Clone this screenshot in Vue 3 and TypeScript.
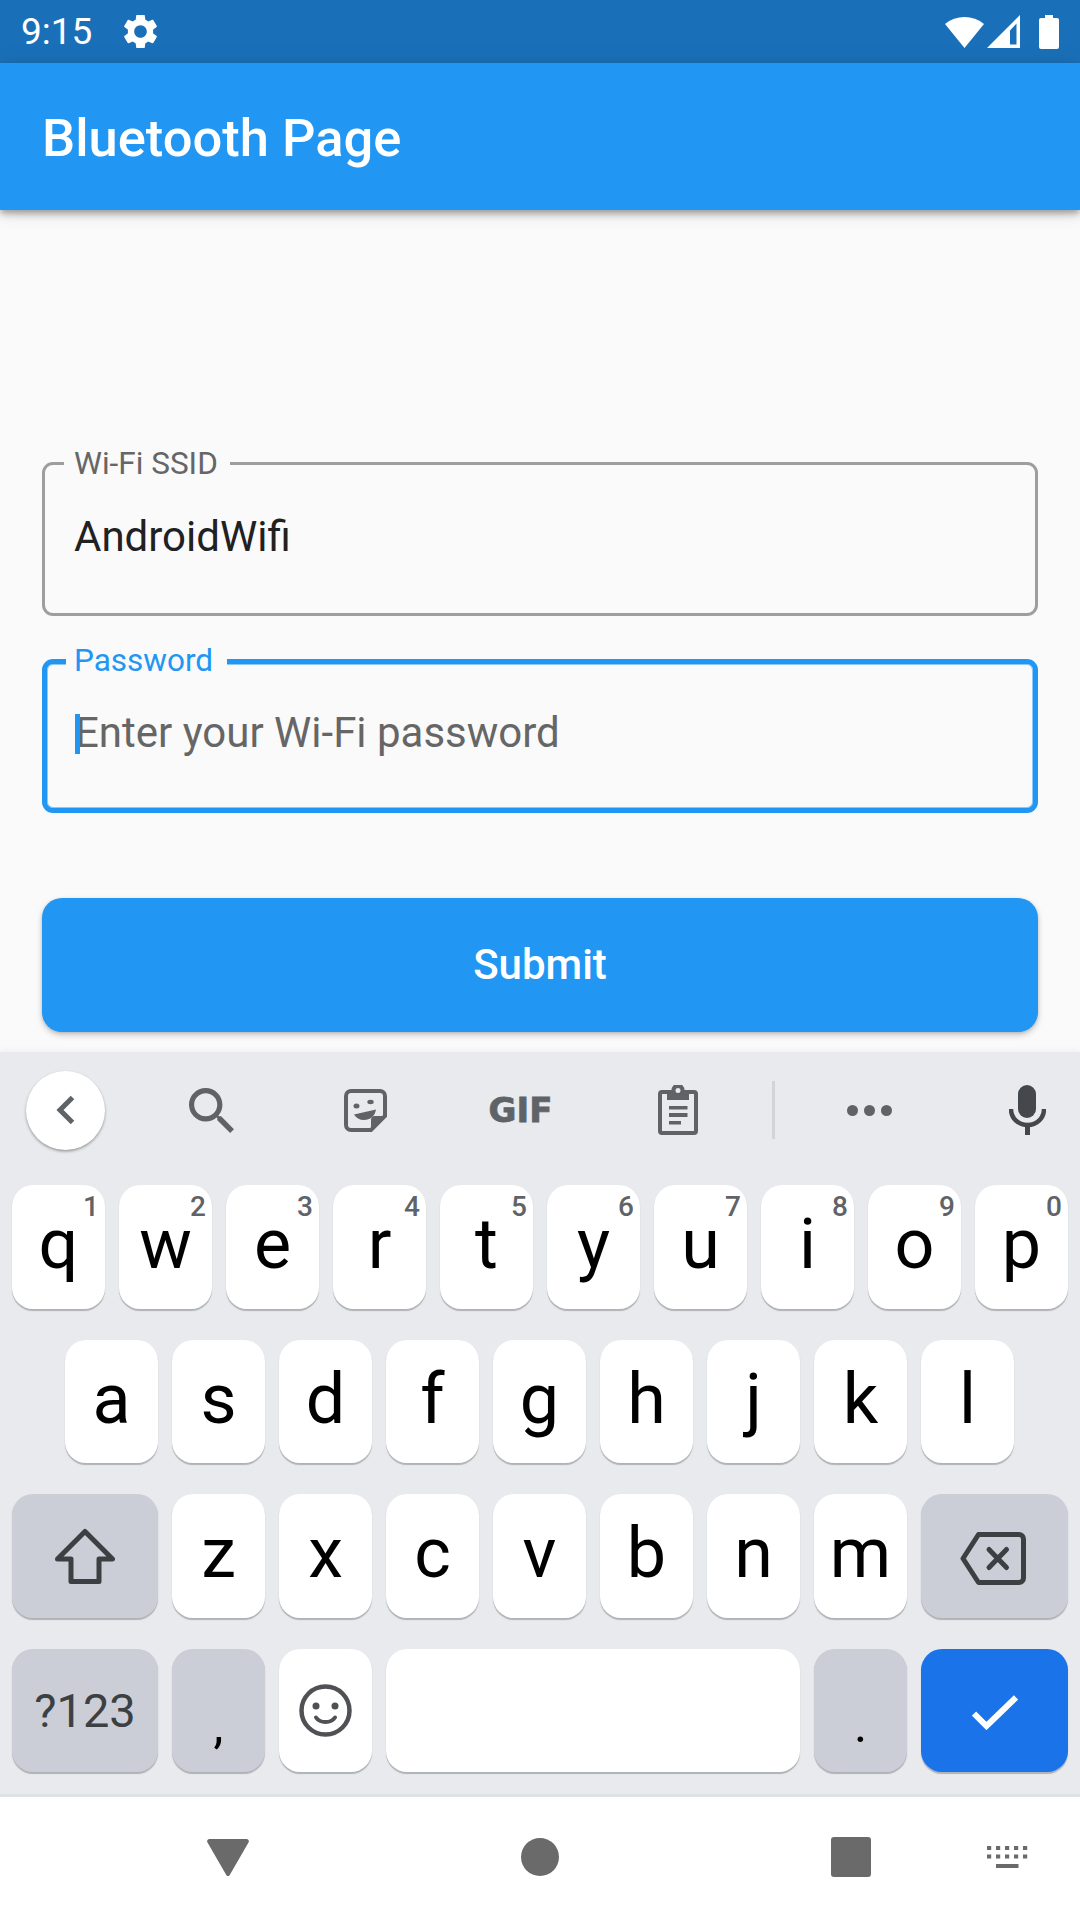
<template>
    <main class="screen">
        <div class="status-bar">
            <span class="clock">9:15</span>
            <svg class="gear" viewBox="2.6 2.6 18.8 18.8">
                <path
                    d="M19.14 12.94c.04-.3.06-.61.06-.94 0-.32-.02-.64-.07-.94l2.03-1.58c.18-.14.23-.41.12-.61l-1.92-3.32c-.12-.22-.37-.29-.59-.22l-2.39.96c-.5-.38-1.03-.7-1.62-.94l-.36-2.54c-.04-.24-.24-.41-.48-.41h-3.84c-.24 0-.43.17-.47.41l-.36 2.54c-.59.24-1.13.57-1.62.94l-2.39-.96c-.22-.08-.47 0-.59.22L2.74 8.87c-.12.21-.08.47.12.61l2.03 1.58c-.05.3-.09.63-.09.94s.02.64.07.94l-2.03 1.58c-.18.14-.23.41-.12.61l1.92 3.32c.12.22.37.29.59.22l2.39-.96c.5.38 1.03.7 1.62.94l.36 2.54c.05.24.24.41.48.41h3.84c.24 0 .44-.17.47-.41l.36-2.54c.59-.24 1.13-.56 1.62-.94l2.39.96c.22.08.47 0 .59-.22l1.92-3.32c.12-.22.07-.47-.12-.61l-2.01-1.58zM12 15.6c-1.98 0-3.6-1.62-3.6-3.6s1.62-3.6 3.6-3.6 3.6 1.62 3.6 3.6-1.62 3.6-3.6 3.6z"
                />
            </svg>
            <svg class="wifi" viewBox="0 0 39 33">
                <path d="M19.5 33 0 9A31 31 0 0 1 39 9Z" />
            </svg>
            <svg class="signal" viewBox="0 0 33 33">
                <path fill-rule="evenodd" d="M0 33 33 0V33ZM23 15.5V29.5H29.5V8.5Z" />
            </svg>
            <svg class="battery" viewBox="0 0 20 34">
                <path d="M6 0H14V3H18A2 2 0 0 1 20 5V32A2 2 0 0 1 18 34H2A2 2 0 0 1 0 32V5A2 2 0 0 1 2 3H6Z" />
            </svg>
        </div>

        <header class="app-bar">Bluetooth Page</header>

        <section class="content">
            <label class="field">
                <span class="field-label">Wi-Fi SSID</span>
                <input v-model="ssid" type="text" />
            </label>

            <label class="field focused">
                <span class="field-label">Password</span>
                <input
                    v-model="password"
                    type="text"
                    placeholder="Enter your Wi-Fi password"
                />
                <span class="caret"></span>
            </label>

            <button class="submit" type="button">Submit</button>
        </section>

        <section class="keyboard">
            <div class="strip">
                <div class="strip-back">
                    <svg viewBox="0 0 19 30" width="19" height="30">
                        <path d="M16.5 2.5 4 15l12.5 12.5" class="line" stroke-width="5" />
                    </svg>
                </div>
                <svg class="strip-search" viewBox="3 3 17.5 17.5">
                    <path
                        d="M15.5 14h-.79l-.28-.27C15.41 12.59 16 11.11 16 9.5 16 5.91 13.09 3 9.5 3S3 5.91 3 9.5 5.91 16 9.5 16c1.61 0 3.09-.59 4.23-1.57l.27.28v.79l5 4.99L20.49 19l-4.99-5zm-6 0C7.01 14 5 11.99 5 9.5S7.01 5 9.5 5 14 7.01 14 9.5 11.99 14 9.5 14z"
                    />
                </svg>
                <svg class="strip-sticker" viewBox="0 0 43 43">
                    <path
                        class="line"
                        stroke-width="4"
                        d="M7 2H36a5 5 0 0 1 5 5V27L27 41H7a5 5 0 0 1-5-5V7a5 5 0 0 1 5-5Z"
                    />
                    <path d="M41 27H31a4 4 0 0 0-4 4V41Z" />
                    <ellipse cx="12.5" cy="17" rx="3" ry="2.5" />
                    <ellipse cx="26.5" cy="13" rx="3.2" ry="2.2" />
                    <path d="M10 25.5 32 20.5C31 27 26 31 20 31 15.500 31 12 29 10 25.500Z" />
                </svg>
                <span class="strip-gif">GIF</span>
                <svg class="strip-clip" viewBox="0 0 40 50">
                    <path
                        class="line"
                        stroke-width="4"
                        d="M9 7H4a2 2 0 0 0-2 2V46a2 2 0 0 0 2 2H36a2 2 0 0 0 2-2V9a2 2 0 0 0-2-2H31"
                    />
                    <path
                        fill-rule="evenodd"
                        d="M9 5H13.500A6.500 6.500 0 0 1 26.500 5H31V15H9ZM20 3A2.500 2.500 0 1 0 20 8 2.500 2.500 0 1 0 20 3Z"
                    />
                    <rect x="11" y="21" width="18.500" height="3.500" />
                    <rect x="11" y="28" width="18.500" height="4" />
                    <rect x="11" y="36" width="12" height="3.500" />
                </svg>
                <span class="strip-divider"></span>
                <div class="strip-dots"><i></i><i></i><i></i></div>
                <svg class="strip-mic" viewBox="0 0 37 50">
                    <rect x="9" y="0" width="18" height="33" rx="9" />
                    <path d="M2 24C2 33 9 40 18.500 40S35 33 35 24" class="line" stroke-width="4.500" />
                    <rect x="16" y="39" width="5" height="11" />
                </svg>
            </div>

            <div v-for="(row, r) in letterRows" :key="r" class="key-row" :class="{ inset: r === 1 }">
                <template v-if="r === 2">
                    <div class="key fn wide">
                        <svg class="icon-shift" viewBox="0 0 60 56">
                            <path
                                class="line dark"
                                stroke-width="5"
                                stroke-linejoin="round"
                                d="M30 3.500 57.500 31H44V53.500H16V31H2.500Z"
                            />
                        </svg>
                    </div>
                </template>
                <div v-for="k in row" :key="k.letter" class="key">
                    <span v-if="k.hint" class="hint">{{ k.hint }}</span>
                    <span class="key-label">{{ k.letter }}</span>
                </div>
                <template v-if="r === 2">
                    <div class="key fn wide right">
                        <svg class="icon-del" viewBox="0 0 66 53">
                            <path
                                class="line dark"
                                stroke-width="5"
                                stroke-linejoin="round"
                                d="M18.500 2.500H59A4.500 4.500 0 0 1 63.500 7V46A4.500 4.500 0 0 1 59 50.500H18.500L3 26.500Z"
                            />
                            <path
                                class="line dark"
                                stroke-width="5"
                                stroke-linecap="round"
                                d="M29 17.500 46.500 35.500M46.500 17.500 29 35.500"
                            />
                        </svg>
                    </div>
                </template>
            </div>

            <div class="key-row">
                <div class="key fn wide sym">?123</div>
                <div class="key fn punct">,</div>
                <div class="key">
                    <svg class="icon-emoji" viewBox="0 0 53 53">
                        <circle cx="26.500" cy="26.500" r="24" class="line emoji" stroke-width="4.500" />
                        <circle cx="17" cy="22" r="3.500" fill="#4f5154" />
                        <circle cx="36" cy="22" r="3.500" fill="#4f5154" />
                        <path d="M17 33.500C21 39.500 32 39.500 36 33.500" class="line emoji" stroke-width="4" stroke-linecap="round" />
                    </svg>
                </div>
                <div class="key space"></div>
                <div class="key fn punct">.</div>
                <div class="key wide right enter">
                    <svg class="icon-check" viewBox="0 0 46 35">
                        <path d="M2 18.500 14.500 31 44 2.500" fill="none" stroke="#fff" stroke-width="6" />
                    </svg>
                </div>
            </div>
        </section>

        <nav class="nav-bar">
            <svg class="nav-back" viewBox="0 0 42 37">
                <path d="M2.500 0H39.500C41.500 0 42.500 2 41.500 3.500L23 35.500C22 37.500 20 37.500 19 35.500L.5 3.500C-.5 2 .5 0 2.500 0Z" />
            </svg>
            <span class="nav-home"></span>
            <span class="nav-recent"></span>
            <svg class="nav-kbd" viewBox="0 0 41 22">
                <template v-for="y in [0, 8.500]" :key="y">
                    <rect v-for="x in [0, 9, 18, 27, 36]" :key="x" :x="x" :y="y" width="4.200" height="4" />
                </template>
                <rect x="9" y="18" width="22.500" height="4" />
            </svg>
        </nav>
    </main>
</template>

<script setup lang="ts">
import { ref } from "vue";

interface KeyItem {
    letter: string;
    hint?: string;
}

const ssid = ref("AndroidWifi");
const password = ref("");

function toKeys(letters: string, hints = ""): KeyItem[] {
    return letters.split("").map((letter, i) => ({ letter, hint: hints[i] }));
}

const letterRows: KeyItem[][] = [
    toKeys("qwertyuiop", "1234567890"),
    toKeys("asdfghjkl"),
    toKeys("zxcvbnm"),
];
</script>

<style scoped>
.screen {
    width: 1080px;
    height: 1920px;
    display: flex;
    flex-direction: column;
    background: #fafafa;
    font-family: Roboto, "Liberation Sans", sans-serif;
    overflow: hidden;
}

.status-bar {
    height: 63px;
    display: flex;
    align-items: center;
    padding-left: 21px;
    background: #1a70b8;
    color: #fff;
    flex: none;
}

.clock {
    font-size: 37px;
    width: 103px;
    line-height: 63px;
}

.status-bar svg {
    fill: #fff;
    display: block;
}

.gear {
    width: 33px;
    height: 33px;
}

.wifi {
    width: 39px;
    height: 33px;
    margin-left: 788px;
}

.signal {
    width: 33px;
    height: 33px;
    margin-left: 3px;
}

.battery {
    width: 20px;
    height: 34px;
    margin-left: 19px;
}

.app-bar {
    height: 147px;
    flex: none;
    display: flex;
    align-items: center;
    padding: 2px 42px 0;
    box-sizing: border-box;
    background: #2196f3;
    color: #fff;
    font-size: 52.5px;
    font-weight: 500;
    box-shadow:
        0 5px 7px rgba(0, 0, 0, 0.16),
        0 2px 20px rgba(0, 0, 0, 0.12),
        0 3px 6px -1px rgba(0, 0, 0, 0.22);
    position: relative;
}

.content {
    height: 842px;
    flex: none;
    box-sizing: border-box;
    padding: 252px 42px 0;
    display: flex;
    flex-direction: column;
}

.field {
    position: relative;
    display: block;
    height: 154px;
    flex: none;
    box-sizing: border-box;
    border: 3px solid #9e9e9e;
    border-radius: 11px;
}

.field.focused {
    margin-top: 43px;
    border: 5px solid #2196f3;
    box-shadow: inset 0 0 0 1px rgba(33, 150, 243, 0.5);
}

.field-label {
    position: absolute;
    left: 19px;
    top: -20px;
    padding: 0 12px 0 10px;
    background: #fafafa;
    color: #666;
    font-size: 31.5px;
    line-height: 37px;
}

.focused .field-label {
    left: 19px;
    top: -22px;
    padding: 0 14px 0 8px;
    color: #2196f3;
}

.field input {
    display: block;
    width: 100%;
    height: 100%;
    box-sizing: border-box;
    border: 0;
    outline: 0;
    background: transparent;
    padding: 0 29px 6px;
    font-family: inherit;
    font-size: 42px;
    color: #212121;
}

.focused input {
    padding: 0 28px 8px;
}

.field input::placeholder {
    color: #666;
    opacity: 1;
}

.caret {
    position: absolute;
    left: 28px;
    top: 50px;
    width: 5px;
    height: 40px;
    background: #2196f3;
}

.submit {
    margin-top: 85px;
    height: 134px;
    flex: none;
    border: 0;
    border-radius: 20px;
    padding: 0 0 2px;
    background: #2196f3;
    color: #fff;
    font-family: inherit;
    font-size: 42px;
    font-weight: 500;
    box-shadow:
        0 3px 6px rgba(0, 0, 0, 0.2),
        0 1px 3px rgba(0, 0, 0, 0.12);
}

.keyboard {
    height: 745px;
    flex: none;
    background: #e8eaed;
    box-sizing: border-box;
    border-bottom: 3px solid #dfe1e5;
    box-shadow: 0 -3px 5px rgba(0, 0, 0, 0.03);
    display: flex;
    flex-direction: column;
}

.strip {
    width: 100%;
    height: 133px;
    flex: none;
    display: flex;
    align-items: center;
    padding: 0 0 17px 26px;
    box-sizing: border-box;
    fill: #5f6368;
}

.strip svg {
    display: block;
    flex: none;
}

.line {
    fill: none;
    stroke: #5f6368;
}

.line.dark {
    stroke: #3c4043;
}

.line.emoji {
    stroke: #4f5154;
}

.strip-back {
    width: 79px;
    height: 79px;
    flex: none;
    border-radius: 50%;
    background: #fff;
    box-shadow: 0 1.5px 3px rgba(0, 0, 0, 0.35);
    display: flex;
    align-items: center;
    justify-content: center;
}

.strip-search {
    width: 45px;
    height: 45px;
    margin-left: 84px;
}

.strip-sticker {
    width: 43px;
    height: 43px;
    margin-left: 110px;
}

.strip-gif {
    width: 61px;
    margin-left: 103px;
    font-family: "DejaVu Sans", sans-serif;
    font-weight: 700;
    font-size: 34px;
    line-height: 40px;
    color: #5f6368;
    -webkit-text-stroke: 0.8px #5f6368;
    white-space: nowrap;
    display: flex;
    justify-content: center;
    flex: none;
}

.strip-clip {
    width: 40px;
    height: 50px;
    margin-left: 107px;
}

.strip-divider {
    width: 3px;
    height: 58px;
    margin-left: 74px;
    background: #d2d4d8;
    flex: none;
}

.strip-dots {
    display: flex;
    gap: 6px;
    margin-left: 72px;
    flex: none;
}

.strip-dots i {
    width: 11px;
    height: 11px;
    border-radius: 50%;
    background: #5f6368;
}

.strip-mic {
    width: 37px;
    height: 50px;
    margin-left: 117px;
    fill: #44474b;
}

.strip-mic .line {
    stroke: #44474b;
}

.key-row {
    display: flex;
    gap: 14px;
    height: 123.500px;
    margin-bottom: 31px;
    padding-left: 12px;
    flex: none;
}

.key-row.inset {
    padding-left: 65px;
}

.key {
    position: relative;
    width: 93px;
    height: 123.500px;
    box-sizing: border-box;
    padding-bottom: 5px;
    border-radius: 21px;
    background: #fff;
    box-shadow: 0 1.500px 1px #b0b2b6;
    display: flex;
    align-items: center;
    justify-content: center;
    font-size: 70px;
    color: #000;
    flex: none;
}

.key-label {
    line-height: 50px;
}

.key.fn {
    background: #cbced6;
}

.key.wide {
    width: 146px;
    padding-bottom: 0;
}

.key.wide.right {
    width: 147px;
}

.key.space {
    width: 414px;
}

.key.enter {
    background: #1a73e8;
}

.key.sym {
    font-size: 47px;
    color: #3c4043;
}

.key.punct {
    font-size: 50px;
    padding: 29px 0 0;
}

.hint {
    position: absolute;
    top: 10px;
    right: 6px;
    font-size: 28px;
    font-weight: 500;
    line-height: 24px;
    color: #5f6368;
}

.icon-shift {
    width: 60px;
    height: 56px;
}

.icon-del {
    width: 66px;
    height: 53px;
    margin: 5px 3px 0 0;
}

.icon-emoji {
    width: 53px;
    height: 53px;
    margin-top: 5px;
}

.icon-check {
    width: 46px;
    height: 35px;
    margin-top: 5px;
}

.nav-bar {
    flex: 1;
    display: flex;
    align-items: center;
    padding: 0 0 3px 207px;
    background: #fff;
    fill: #6a6a6a;
}

.nav-back {
    width: 42px;
    height: 37px;
    flex: none;
}

.nav-home {
    width: 38px;
    height: 38px;
    border-radius: 50%;
    background: #6a6a6a;
    margin-left: 272px;
    flex: none;
}

.nav-recent {
    width: 40px;
    height: 40px;
    border-radius: 3px;
    background: #6a6a6a;
    margin-left: 272px;
    flex: none;
}

.nav-kbd {
    width: 41px;
    height: 22px;
    margin-left: 116px;
    flex: none;
}
</style>

<style>
html,
body {
    margin: 0;
    background: #fafafa;
}
</style>
